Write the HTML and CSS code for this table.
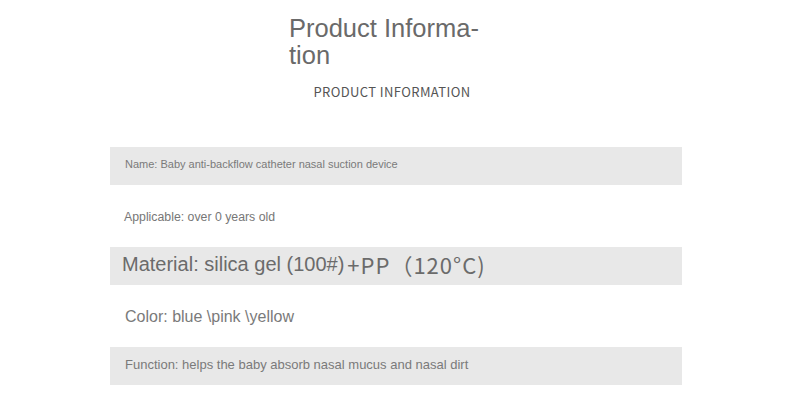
FILE: index.html
```html
<!DOCTYPE html>
<html>
<head>
<meta charset="utf-8">
<link rel="stylesheet" href="styles.css">
</head>
<body>
<div class="page">
  <header class="head">
    <h1 class="title">Product Informa-<br>tion</h1>
    <div class="subtitle">PRODUCT INFORMATION</div>
  </header>
  <div class="rows">
    <div class="row gray"><span class="t1">Name: Baby anti-backflow catheter nasal suction device</span></div>
    <div class="row"><span class="t2">Applicable: over 0 years old</span></div>
    <div class="row gray"><span class="t3">Material: silica gel (100#)</span><span class="t3b">+PP（120°C)</span></div>
    <div class="row"><span class="t4">Color: blue \pink \yellow</span></div>
    <div class="row gray"><span class="t5">Function: helps the baby absorb nasal mucus and nasal dirt</span></div>
  </div>
</div>
</body>
</html>
```
FILE: styles.css
```css
html, body { margin: 0; padding: 0; background: #fff; }
body { font-family: "Liberation Sans", Arial, sans-serif; color: #777; }
.page { width: 790px; height: 417px; overflow: hidden; }
.head { display: flex; flex-direction: column; align-items: center; padding-top: 15px; }
.title {
  margin: 0; width: 212px; font-weight: normal; font-size: 25.5px; line-height: 27px;
  color: #6a6a6a; text-align: left;
}
.subtitle {
  margin-top: 14px; margin-right: 6px; font-family: "Noto Sans CJK SC", "Noto Sans", sans-serif; font-size: 13px;
  letter-spacing: 0.4px; color: #555; line-height: 18px;
}
.rows { margin: 46px 0 0 110px; width: 572px; display: flex; flex-direction: column; gap: 12px; }
.row { height: 38px; box-sizing: border-box; display: flex; align-items: center; padding-left: 15px; white-space: nowrap; }
.gray { background: #e8e8e8; padding-bottom: 4px; }
.t1 { font-size: 11px; color: #7a7a7a; }
.t2 { font-size: 12.3px; color: #777; margin-left: -1px; padding-top: 2px; }
.t3 { font-size: 20px; color: #6b6b6b; margin-left: -3px; }
.t3b { font-family: "Noto Sans CJK SC", "Noto Sans", sans-serif; font-size: 22px; color: #6b6b6b; margin-left: 3px; letter-spacing: 1px; }
.t4 { font-size: 16px; color: #7a7a7a; padding-top: 1px; }
.t5 { font-size: 13px; color: #7a7a7a; }
```
